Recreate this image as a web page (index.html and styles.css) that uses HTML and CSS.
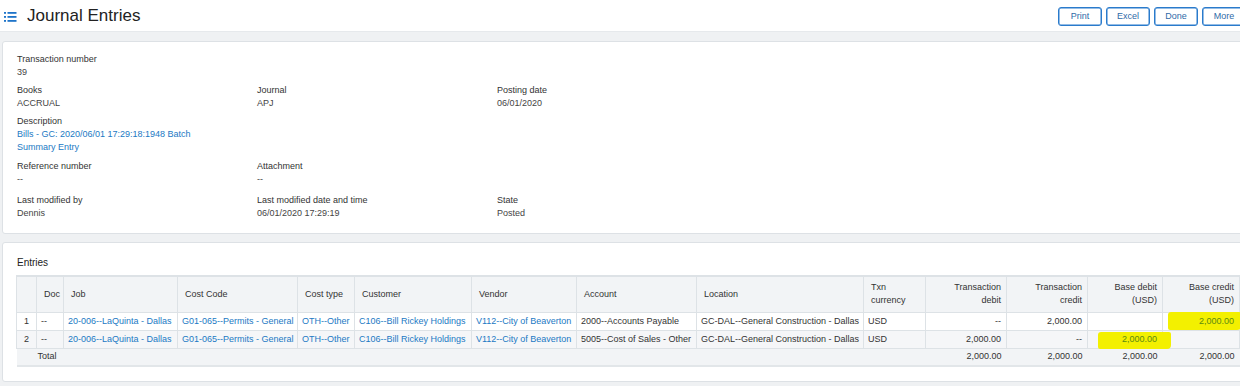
FILE: index.html
```html
<!DOCTYPE html>
<html lang="en">
<head>
    <meta charset="UTF-8">
    <meta name="viewport" content="width=device-width, initial-scale=1.0">
    <title>Journal Entries</title>
    <link rel="stylesheet" href="styles.css">
</head>
<body>
    <div class="page">
        <header class="topbar">
            <div class="title-wrap">
                <svg class="menu-icon" width="13" height="11" viewBox="0 0 13 11">
                    <rect x="0" y="1" width="2" height="1.8"/>
                    <rect x="3.5" y="1" width="9" height="1.8"/>
                    <rect x="0" y="5" width="2" height="1.8"/>
                    <rect x="3.5" y="5" width="9" height="1.8"/>
                    <rect x="0" y="9" width="2" height="1.8"/>
                    <rect x="3.5" y="9" width="9" height="1.8"/>
                </svg>
                <h1>Journal Entries</h1>
            </div>
            <div class="actions">
                <button class="btn">Print</button>
                <button class="btn">Excel</button>
                <button class="btn">Done</button>
                <button class="btn">More</button>
            </div>
        </header>

        <main class="content">
            <section class="card details">
                <div class="field-row">
                    <div class="field">
                        <div class="label">Transaction number</div>
                        <div class="value">39</div>
                    </div>
                </div>
                <div class="field-row">
                    <div class="field">
                        <div class="label">Books</div>
                        <div class="value">ACCRUAL</div>
                    </div>
                    <div class="field">
                        <div class="label">Journal</div>
                        <div class="value">APJ</div>
                    </div>
                    <div class="field">
                        <div class="label">Posting date</div>
                        <div class="value">06/01/2020</div>
                    </div>
                </div>
                <div class="field-row">
                    <div class="field">
                        <div class="label">Description</div>
                        <div class="value link desc">Bills - GC: 2020/06/01 17:29:18:1948 Batch Summary Entry</div>
                    </div>
                </div>
                <div class="field-row row-ref">
                    <div class="field">
                        <div class="label">Reference number</div>
                        <div class="value">--</div>
                    </div>
                    <div class="field">
                        <div class="label">Attachment</div>
                        <div class="value">--</div>
                    </div>
                </div>
                <div class="field-row row-last">
                    <div class="field">
                        <div class="label">Last modified by</div>
                        <div class="value">Dennis</div>
                    </div>
                    <div class="field">
                        <div class="label">Last modified date and time</div>
                        <div class="value">06/01/2020 17:29:19</div>
                    </div>
                    <div class="field">
                        <div class="label">State</div>
                        <div class="value">Posted</div>
                    </div>
                </div>
            </section>

            <section class="card entries">
                <h2>Entries</h2>
                <table class="grid">
                    <colgroup>
                        <col style="width:20px"><col style="width:27px"><col style="width:114px">
                        <col style="width:120px"><col style="width:57px"><col style="width:117px">
                        <col style="width:105px"><col style="width:120px"><col style="width:167px">
                        <col style="width:62px"><col style="width:81px"><col style="width:81px">
                        <col style="width:75px"><col style="width:77px">
                    </colgroup>
                    <thead>
                        <tr>
                            <th></th>
                            <th>Doc</th>
                            <th>Job</th>
                            <th>Cost Code</th>
                            <th>Cost type</th>
                            <th>Customer</th>
                            <th>Vendor</th>
                            <th>Account</th>
                            <th>Location</th>
                            <th>Txn<br>currency</th>
                            <th class="num">Transaction<br>debit</th>
                            <th class="num">Transaction<br>credit</th>
                            <th class="num">Base debit<br>(USD)</th>
                            <th class="num">Base credit<br>(USD)</th>
                        </tr>
                    </thead>
                    <tbody>
                        <tr>
                            <td class="idx">1</td>
                            <td>--</td>
                            <td class="link">20-006--LaQuinta - Dallas</td>
                            <td class="link">G01-065--Permits - General</td>
                            <td class="link">OTH--Other</td>
                            <td class="link">C106--Bill Rickey Holdings</td>
                            <td class="link">V112--City of Beaverton</td>
                            <td>2000--Accounts Payable</td>
                            <td>GC-DAL--General Construction - Dallas</td>
                            <td>USD</td>
                            <td class="num">--</td>
                            <td class="num">2,000.00</td>
                            <td class="num"></td>
                            <td class="num marked mark-credit"><span class="marked-text">2,000.00</span></td>
                        </tr>
                        <tr class="alt">
                            <td class="idx">2</td>
                            <td>--</td>
                            <td class="link">20-006--LaQuinta - Dallas</td>
                            <td class="link">G01-065--Permits - General</td>
                            <td class="link">OTH--Other</td>
                            <td class="link">C106--Bill Rickey Holdings</td>
                            <td class="link">V112--City of Beaverton</td>
                            <td>5005--Cost of Sales - Other</td>
                            <td>GC-DAL--General Construction - Dallas</td>
                            <td>USD</td>
                            <td class="num">2,000.00</td>
                            <td class="num">--</td>
                            <td class="num marked mark-debit"><span class="marked-text">2,000.00</span></td>
                            <td class="num"></td>
                        </tr>
                        <tr class="total">
                            <td></td>
                            <td class="total-label" colspan="9">Total</td>
                            <td class="num">2,000.00</td>
                            <td class="num">2,000.00</td>
                            <td class="num">2,000.00</td>
                            <td class="num">2,000.00</td>
                        </tr>
                    </tbody>
                </table>
            </section>
        </main>
    </div>
</body>
</html>
```

FILE: styles.css
```css
body {
    margin: 0;
    background: #fff;
    font-family: "Liberation Sans", Arial, sans-serif;
    color: #333;
}
.page {
    width: 1240px;
    height: 386px;
    overflow: hidden;
    background: #eff1f3;
}
.topbar {
    height: 32px;
    background: #fff;
    display: flex;
    align-items: center;
    justify-content: space-between;
    padding-left: 4px;
    border-bottom: 1px solid #e6e9ec;
    box-sizing: border-box;
}
.title-wrap {
    display: flex;
    align-items: center;
}
.menu-icon {
    fill: #1f74c9;
    margin-top: 1px;
}
h1 {
    margin: 0 0 0 10px;
    font-size: 17px;
    font-weight: normal;
    color: #222;
}
.actions {
    display: flex;
    gap: 4px;
    margin-right: -6px;
    padding-top: 1px;
}
.btn {
    height: 19px;
    padding: 0;
    width: 44px;
    background: #fff;
    border: 1px solid #2a7bcc;
    box-shadow: inset 0 0 0 0.5px #2a7bcc;
    border-radius: 3px;
    color: #2f6aa8;
    font-family: inherit;
    font-size: 9px;
}
.content {
    padding: 9px 0 0 2px;
}
.card {
    background: #fff;
    border: 1px solid #dde1e5;
    border-radius: 3px;
    margin-right: -12px;
}
.details {
    padding: 10px 14px 13px;
}
.field-row {
    display: grid;
    grid-template-columns: 240px 240px 240px;
    margin-bottom: 4px;
}
.row-ref {
    margin-top: 5px;
}
.row-last {
    margin-top: 7px;
    margin-bottom: 0;
}
.label {
    font-size: 9px;
    line-height: 14px;
    color: #333;
}
.value {
    font-size: 9px;
    line-height: 13px;
    color: #444;
}
.desc {
    max-width: 192px;
}
.link,
.grid td.link {
    color: #1b79c4;
}
.card + .card {
    margin-top: 8px;
}
.entries {
    padding: 13px 0 14px 13px;
}
.entries h2 {
    margin: 0 0 5px 1px;
    font-size: 10px;
    line-height: 14px;
    font-weight: normal;
    color: #222;
}
.grid {
    width: 1223px;
    table-layout: fixed;
    border-collapse: collapse;
    font-size: 9px;
}
.grid th {
    background: #f2f4f6;
    border: 1px solid #dde2e6;
    border-top-width: 2px;
    font-weight: normal;
    text-align: left;
    line-height: 13px;
    padding: 4px 5px 5px 7px;
    height: 26px;
    color: #333;
    white-space: nowrap;
}
.grid td {
    border: 1px solid #dde2e6;
    line-height: 13px;
    padding: 2px 3px 2px 4px;
    white-space: nowrap;
    overflow: hidden;
    color: #333;
}
.grid th.num,
.grid td.num {
    text-align: right;
    padding-right: 5px;
}
.grid td.idx {
    text-align: center;
    padding: 2px 0;
}
.grid tr.alt td {
    background: #f5f6f8;
}
.grid tr.total td {
    background: #f2f4f6;
    border-left: none;
    border-right: none;
    border-bottom: 2px solid #e2e6e9;
    padding-top: 1px;
    padding-bottom: 2px;
}
.grid td.total-label {
    padding-left: 1px;
}
.grid td.marked {
    position: relative;
    overflow: visible;
}
.marked::before {
    content: "";
    position: absolute;
    background: #f3f000;
    border-radius: 3px 2px 4px 2px;
}
.mark-credit::before {
    left: 5px;
    right: -2px;
    top: -1px;
    bottom: 0;
}
.mark-debit::before {
    left: 10px;
    right: -9px;
    top: 1px;
    bottom: -1px;
}
.marked-text {
    position: relative;
    color: #5b8a12;
}
```
